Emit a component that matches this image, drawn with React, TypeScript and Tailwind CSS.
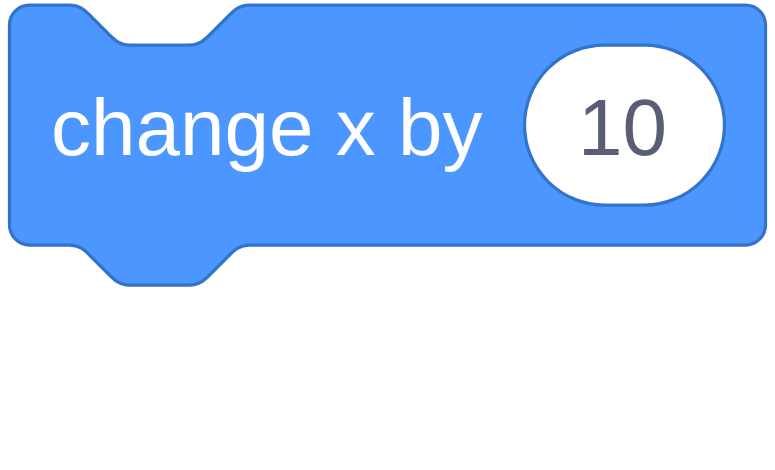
import React from "react";

export default function App() {
  return (
    <div className="w-[775px] h-[470px] bg-white overflow-hidden font-['Liberation_Sans',Arial,sans-serif]">
      <svg width="775" height="470" viewBox="0 0 775 470" className="block">
        <g transform="translate(9.5,5) scale(5)">
          <path
            d="M 0,4 A 4,4 0 0,1 4,0 H 12 c 2,0 3,1 4,2 l 4,4 c 1,1 2,2 4,2 h 12 c 2,0 3,-1 4,-2 l 4,-4 c 1,-1 2,-2 4,-2 H 147.2 a 4,4 0 0,1 4,4 v 40 a 4,4 0 0,1 -4,4 H 48 c -2,0 -3,1 -4,2 l -4,4 c -1,1 -2,2 -4,2 h -12 c -2,0 -3,-1 -4,-2 l -4,-4 c -1,-1 -2,-2 -4,-2 H 4 a 4,4 0 0,1 -4,-4 z"
            fill="#4c97ff"
            stroke="#3373cc"
            strokeWidth="0.65"
          />
          <text x="8.3" y="30" fill="#ffffff" fontSize="16">
            change x by
          </text>
          <rect x="103" y="8" width="40" height="32" rx="16" fill="#ffffff" stroke="#3373cc" strokeWidth="0.65" />
          <text x="122.6" y="30" textAnchor="middle" fill="#575e75" fontSize="16">
            10
          </text>
        </g>
      </svg>
    </div>
  );
}
